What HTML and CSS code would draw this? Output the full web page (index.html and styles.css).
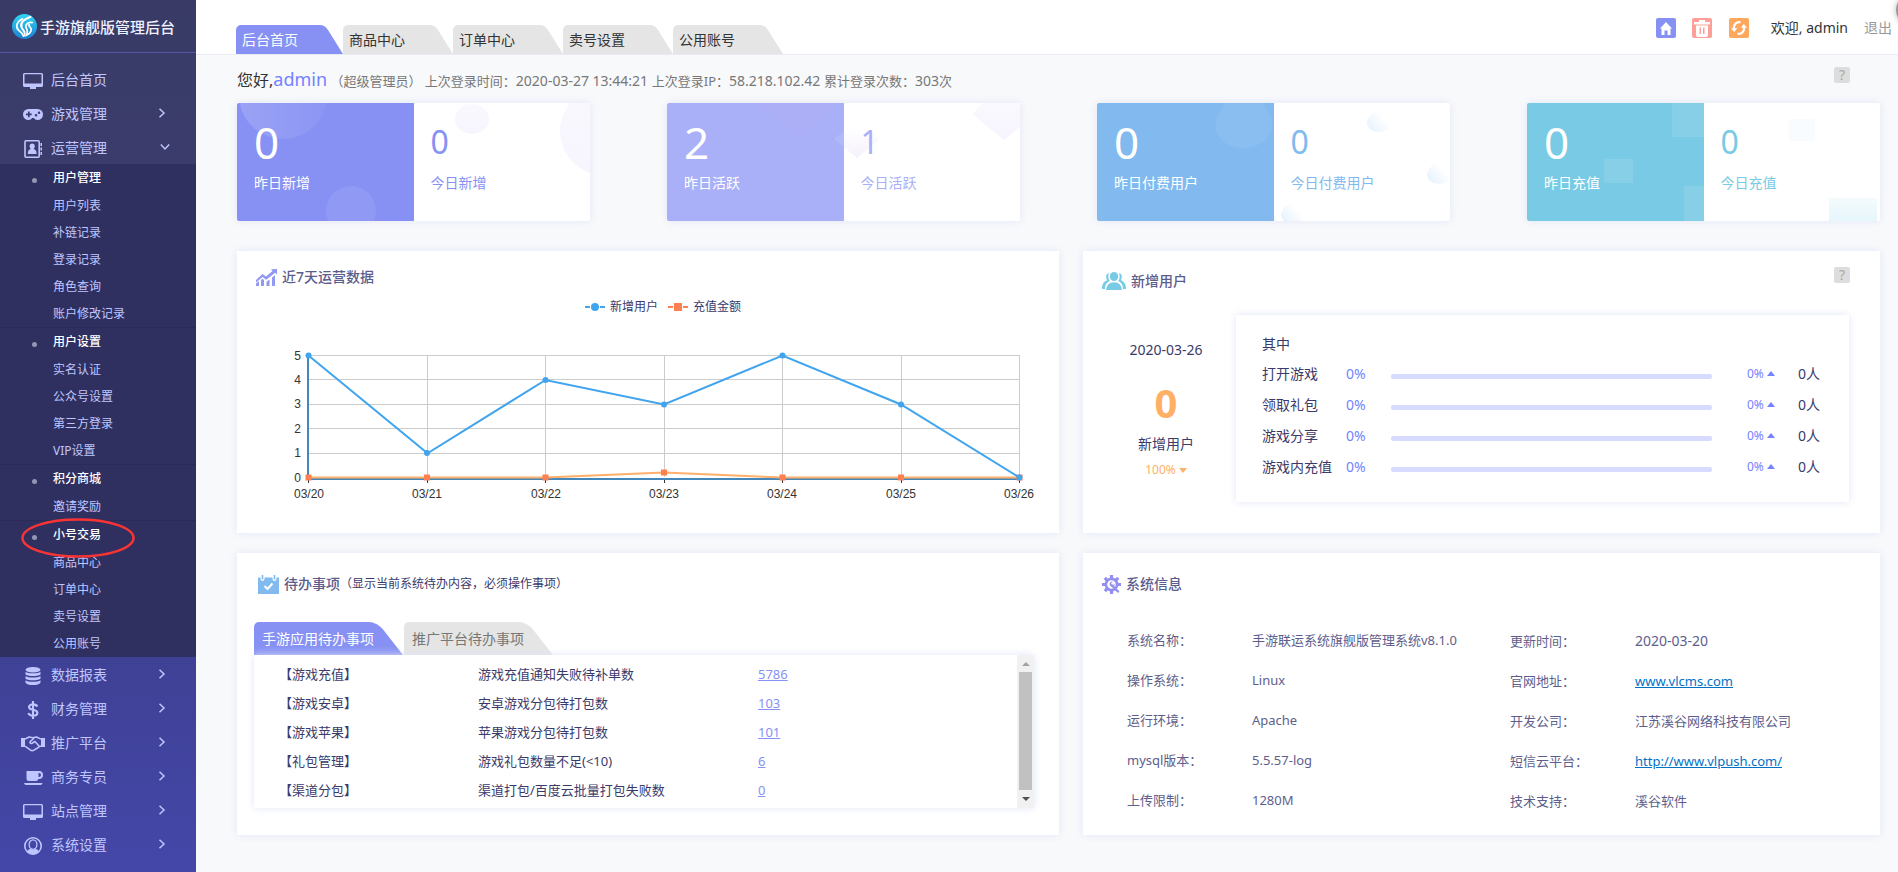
FILE: index.html
```html
<!DOCTYPE html>
<html lang="zh-CN">
<head>
<meta charset="utf-8">
<meta name="viewport" content="width=device-width, initial-scale=1">
<title>手游旗舰版管理后台</title>
<link rel="stylesheet" href="styles.css">
</head>
<body>
<svg width="0" height="0" class="defs" aria-hidden="true">
  <defs>
    <linearGradient id="logo-fill" x1="0" y1="0" x2="0" y2="1"><stop offset="0" stop-color="#2fd8f4"/><stop offset="1" stop-color="#1c80d0"/></linearGradient>
    <linearGradient id="drop-fill" x1="1" y1="0" x2="0" y2="1"><stop offset="0.4" stop-color="#fff"/><stop offset="1" stop-color="#e2f0fd"/></linearGradient>
    <linearGradient id="tint-fill" x1="0" y1="0" x2="0" y2="1"><stop offset="0" stop-color="#f9f9ff"/><stop offset="1" stop-color="#f7f4fd"/></linearGradient>
    <linearGradient id="spill-fill" x1="0" y1="0" x2="0" y2="1"><stop offset="0.2" stop-color="#f3edfc" stop-opacity="0"/><stop offset="1" stop-color="#f3edfc" stop-opacity=".8"/></linearGradient>
    <linearGradient id="fade-right" x1="0" y1="0" x2="1" y2="0"><stop offset="0" stop-color="#fff" stop-opacity=".16"/><stop offset="1" stop-color="#fff" stop-opacity=".04"/></linearGradient>
    <linearGradient id="cyan-fill" x1="0" y1="0" x2="0" y2="1"><stop offset="0" stop-color="#f4fbfd"/><stop offset="1" stop-color="#e6f6fb"/></linearGradient>
    <symbol id="i-monitor" viewBox="0 0 20 16"><path fill-rule="evenodd" d="M1.500 0h17A1.500 1.500 0 0 1 20 1.500v11a1.500 1.500 0 0 1-1.500 1.500H13v2H7v-2H1.500A1.500 1.500 0 0 1 0 12.500v-11A1.500 1.500 0 0 1 1.500 0zM1.500 1.200v9.300h17V1.200z"/></symbol>
    <symbol id="i-chevron" viewBox="0 0 8 10"><path d="M1.500 .8 6 5 1.500 9.200" fill="none" stroke="currentColor" stroke-width="1.500"/></symbol>
    <symbol id="i-drop" viewBox="0 0 24 28"><path d="M12 0C15 8 24 12 24 18.500A12 9.500 0 0 1 0 18.500C0 12 9 8 12 0z" fill="url(#drop-fill)"/></symbol>
  </defs>
</svg>

<div class="app">
  <aside class="sidebar">
    <div class="brand">
      <svg class="brand-logo" viewBox="0 0 26 26" aria-hidden="true"><circle cx="13" cy="13" r="13" fill="url(#logo-fill)"/><g fill="none" stroke="#fff" stroke-linecap="round"><path d="M19 3C13 5 8 9 10 14c1 3 4 3 3 8" stroke-width="2.200"/><path d="M11 5C5 8 3 13 7 17c2 2 4 3 5 6" stroke-width="1.800"/><path d="M21 9c-5-1-8 3-6 6 1 2 2 3 0 7 5-2 6-6 4-8-1-1-2-2-1-3" stroke-width="1.800"/></g></svg>
      <span>手游旗舰版管理后台</span>
    </div>
    <nav class="menu">
      <a class="menu-item" href="#"><span class="menu-icon"><svg width="20" height="16"><use href="#i-monitor"/></svg></span>后台首页</a>
      <a class="menu-item" href="#"><span class="menu-icon"><svg width="20" height="11" viewBox="0 0 20 11"><path fill-rule="evenodd" d="M5.500 0h9a5.500 5.500 0 0 1 0 11c-1.800 0-2.800-1-3.600-2H9.100c-.8 1-1.800 2-3.600 2a5.500 5.500 0 0 1 0-11zM5 2.500v2H3v1.700h2v2h1.700v-2h2V4.500h-2v-2zM13 5a1.200 1.200 0 1 0 .1 2.500A1.200 1.200 0 0 0 13 5zm3-2.500a1.200 1.200 0 1 0 .1 2.500 1.200 1.200 0 0 0-.1-2.500z"/></svg></span>游戏管理<svg class="chev" width="8" height="10"><use href="#i-chevron"/></svg></a>
      <a class="menu-item" href="#"><span class="menu-icon"><svg width="18" height="18" viewBox="0 0 18 18"><rect x="1" y=".8" width="14.200" height="16.400" rx="1" fill="none" stroke="currentColor" stroke-width="1.600"/><path d="M16.500 3H18v3h-1.500zm0 4.500H18v3h-1.500zm0 4.500H18v3h-1.500zM8.200 3.500c1.700 0 2.600 1.200 2.600 2.800 0 1.200-.6 2.200-1.200 2.700 1.600.4 3 1.600 3 5H3.800c0-3.400 1.400-4.600 3-5-.6-.5-1.200-1.500-1.200-2.700 0-1.600.9-2.800 2.600-2.800z"/></svg></span>运营管理<svg class="chev open" width="8" height="10"><use href="#i-chevron"/></svg></a>
      <div class="submenu">
        <div class="group"><a class="group-title" href="#">用户管理</a><a href="#">用户列表</a><a href="#">补链记录</a><a href="#">登录记录</a><a href="#">角色查询</a><a href="#">账户修改记录</a></div>
        <div class="group"><a class="group-title" href="#">用户设置</a><a href="#">实名认证</a><a href="#">公众号设置</a><a href="#">第三方登录</a><a href="#">VIP设置</a></div>
        <div class="group"><a class="group-title" href="#">积分商城</a><a href="#">邀请奖励</a></div>
        <div class="group"><a class="group-title marked" href="#">小号交易<svg class="ring" viewBox="0 0 114 40" aria-hidden="true"><ellipse cx="57" cy="20" rx="55.500" ry="18.500" fill="none" stroke="#fa3434" stroke-width="2.500"/></svg></a><a href="#">商品中心</a><a href="#">订单中心</a><a href="#">卖号设置</a><a href="#">公用账号</a></div>
      </div>
      <a class="menu-item" href="#"><span class="menu-icon"><svg width="16" height="18" viewBox="0 0 16 18"><ellipse cx="8" cy="2.800" rx="7.500" ry="2.800"/><path d="M.5 4.800c2.500 2 12.500 2 15 0v2.400c-1 2.400-14 2.400-15 0zM.5 9c2.500 2 12.500 2 15 0v2.400c-1 2.400-14 2.400-15 0zm0 4.200c2.500 2 12.500 2 15 0v2.200c-1 3.400-14 3.400-15 0z"/></svg></span>数据报表<svg class="chev" width="8" height="10"><use href="#i-chevron"/></svg></a>
      <a class="menu-item" href="#"><span class="menu-icon"><svg width="12" height="18" viewBox="0 0 12 18"><path d="M10.200 5.600C9.600 4 8 3.400 6 3.400c-2.300 0-4 .9-4 2.600 0 4 8.400 1.600 8.400 5.800 0 1.800-1.800 2.900-4.400 2.900-2.200 0-4-.8-4.600-2.700M6 0v18" fill="none" stroke="currentColor" stroke-width="2.100"/></svg></span>财务管理<svg class="chev" width="8" height="10"><use href="#i-chevron"/></svg></a>
      <a class="menu-item" href="#"><span class="menu-icon"><svg width="24" height="16" viewBox="0 0 24 16"><path d="M0 2h4v9H0zm20 0h4v9h-4z"/><path d="M4 3.200 8 1l4 .8L15.500 1 20 3.200M4 10.200l5.500 4c1.200.9 2.200.9 3.500 0l3.500-2.200c1.300-.8 1.400-1.600 3.500-2M13 2.200 9.200 5.600c-.8 1 .6 2.600 2.300 1.400L14 5.500l4 4.500" fill="none" stroke="currentColor" stroke-width="1.500" stroke-linejoin="round"/></svg></span>推广平台<svg class="chev" width="8" height="10"><use href="#i-chevron"/></svg></a>
      <a class="menu-item" href="#"><span class="menu-icon"><svg width="19" height="14" viewBox="0 0 19 14"><path fill-rule="evenodd" d="M2.500 0H15a4 4 0 0 1 0 8h-.7a2.500 2.500 0 0 1-2.300 2H5a2.500 2.500 0 0 1-2.500-2.500zM14.500 2v4h.5a2 2 0 0 0 0-4zM0 12h18.500c-.3 1.300-1 2-2 2H2c-1 0-1.700-.7-2-2z"/></svg></span>商务专员<svg class="chev" width="8" height="10"><use href="#i-chevron"/></svg></a>
      <a class="menu-item" href="#"><span class="menu-icon"><svg width="20" height="16"><use href="#i-monitor"/></svg></span>站点管理<svg class="chev" width="8" height="10"><use href="#i-chevron"/></svg></a>
      <a class="menu-item" href="#"><span class="menu-icon"><svg width="18" height="18" viewBox="0 0 18 18"><circle cx="9" cy="9" r="8.200" fill="none" stroke="currentColor" stroke-width="1.600"/><path d="M3 15c.6-2 1.800-2.800 3.600-3.200 1.400 1.200 3.400 1.200 4.800 0 1.800.4 3 1.200 3.600 3.200-3.500 3-8.500 3-12 0z"/><ellipse cx="9" cy="7.600" rx="3.900" ry="4.700" fill="none" stroke="currentColor" stroke-width="1.300"/></svg></span>系统设置<svg class="chev" width="8" height="10"><use href="#i-chevron"/></svg></a>
    </nav>
  </aside>

  <div class="main">
    <header class="topbar">
      <nav class="tabs">
        <a class="tab active" href="#">后台首页</a>
        <a class="tab" href="#">商品中心</a>
        <a class="tab" href="#">订单中心</a>
        <a class="tab" href="#">卖号设置</a>
        <a class="tab" href="#">公用账号</a>
      </nav>
      <div class="tools">
        <button class="tool home" type="button" aria-label="首页"><svg width="12" height="13" viewBox="0 0 12 13"><path d="M6 0 12 6.500h-1.500V13H7.500V8.500h-3V13H1.500V6.500H0z"/></svg></button>
        <button class="tool trash" type="button" aria-label="清除缓存"><svg width="16" height="17" viewBox="0 0 16 17"><path fill-rule="evenodd" d="M5 0h6v2h5v2.500H0V2h5zM2 5.500h12V15a2 2 0 0 1-2 2H4a2 2 0 0 1-2-2zM5.500 7.500V14h1.500V7.500zm3.500 0V14h1.500V7.500z"/></svg></button>
        <button class="tool refresh" type="button" aria-label="刷新"><svg width="16" height="14" viewBox="0 0 16 14"><path d="M9.500 1.200C5 .5 2.500 4 3 8M6.500 12.800C11 13.500 13.500 10 13 6" fill="none" stroke="#fff" stroke-width="2.200"/><path d="M0 7.200h6.300L3.200 11zM16 6.800H9.700L12.800 3z"/></svg></button>
        <span class="welcome">欢迎, admin</span>
        <a class="logout" href="#">退出</a>
      </div>
      <span class="edge-bubble" aria-hidden="true"></span>
    </header>

    <main class="content">
      <div class="greeting">
        <p><span class="hello">您好,</span><span class="user">admin</span> （超级管理员） 上次登录时间：<span class="value">2020-03-27 13:44:21 </span>上次登录IP：<span class="value">58.218.102.42 </span>累计登录次数：<span class="value">303</span>次</p>
        <button class="help" type="button" aria-label="帮助">?</button>
      </div>

      <section class="stats">
        <article class="stat violet">
          <div class="half solid"><svg class="deco" aria-hidden="true"><circle cx="46" cy="-8" r="44" fill="url(#fade-right)"/><circle cx="114" cy="108" r="25" fill="#fff" opacity=".08"/></svg><strong>0</strong><span>昨日新增</span></div>
          <div class="half"><svg class="deco" aria-hidden="true"><ellipse cx="58" cy="16" rx="17" ry="15" fill="url(#tint-fill)"/><circle cx="190" cy="28" r="44" fill="url(#tint-fill)"/></svg><strong>0</strong><span>今日新增</span></div>
        </article>
        <article class="stat lilac">
          <div class="half solid"><svg class="deco" aria-hidden="true"><path d="M90 0 132 34 172 0z" fill="#c8a8f0" opacity=".13"/></svg><strong>2</strong><span>昨日活跃</span></div>
          <div class="half"><svg class="deco" aria-hidden="true"><path d="M0 28 13 17 36 36 13 55 0 44z" fill="url(#spill-fill)"/><path d="M-10 36 0 28v16z" fill="#fff" opacity=".1"/><path d="M128 11 139 0h38v23l-17 14z" fill="url(#tint-fill)"/></svg><strong>1</strong><span>今日活跃</span></div>
        </article>
        <article class="stat blue">
          <div class="half solid"><svg class="deco" aria-hidden="true"><path d="M128 0h38c10 14 12 26 3 36-11 12-34 12-45 0-8-10-7-20 4-36z" fill="#fff" opacity=".07"/></svg><strong>0</strong><span>昨日付费用户</span></div>
          <div class="half"><svg class="deco" aria-hidden="true"><use href="#i-drop" x="93" y="1" width="24" height="28"/><use href="#i-drop" x="153" y="52" width="24" height="30"/><use href="#i-drop" x="7" y="92" width="24" height="30"/></svg><strong>0</strong><span>今日付费用户</span></div>
        </article>
        <article class="stat cyan">
          <div class="half solid"><svg class="deco" aria-hidden="true"><g fill="#fff" opacity=".1"><path d="M145 0h32v34h-32zM77 56h29v24H77zM157 83h20v35h-20z"/></g></svg><strong>0</strong><span>昨日充值</span></div>
          <div class="half"><svg class="deco" aria-hidden="true"><path d="M85 16h26v22H85z" fill="#f9fcfe"/><path d="M125 95h48v23h-48z" fill="url(#cyan-fill)"/></svg><strong>0</strong><span>今日充值</span></div>
        </article>
      </section>

      <section class="panels">
        <article class="panel trend">
          <h2 class="panel-title"><svg width="21" height="17" viewBox="0 0 21 17" fill="#9199f3"><path d="M0 11 6.500 5l3.500 2.500L16.500 2 15 .3 21 0v5.500l-1.800-1.700-9 7L6.500 8 0 13.500z"/><path d="M0 14.500 3 12v5H0zM5 11l1.500-1.200L8 11v6H5zm5.500 1.800 3-2.300V17h-3zM16 8.500l3-2.300V17h-3z"/></svg>近7天运营数据</h2>
          <svg class="chart" viewBox="0 0 822 238" role="img" aria-label="近7天运营数据">
            <g stroke-width="2" stroke="#40a4ee" fill="#40a4ee"><path d="M348 12h5M363 12h5"/><circle cx="358" cy="12" r="4" stroke="none"/></g>
            <g stroke-width="2" stroke="#ff7f50" fill="#ff7f50"><path d="M431 12h5M446 12h5"/><path d="M437 8h8v8h-8z" stroke="none"/></g>
            <g class="legend-text"><text x="373" y="16">新增用户</text><text x="456" y="16">充值金额</text></g>
            <path d="M71.500 60.500h711M71.500 84.500h711M71.500 109.500h711M71.500 133.500h711M71.500 158.500h711M190.500 60v122M308.500 60v122M427.500 60v122M545.500 60v122M664.500 60v122M782.500 60v122" fill="none" stroke="#ccc"/>
            <path d="M71.500 183v5M190.500 183v5M308.500 183v5M427.500 183v5M545.500 183v5M664.500 183v5M782.500 183v5" stroke="#333"/>
            <path d="M71 60v124h712" fill="none" stroke="#4488bb" stroke-width="2"/>
            <path d="M71 182.500H308.500L427 177.500 545.500 182.500H782.500" fill="none" stroke="#ffaf6c" stroke-width="2"/>
            <path d="M68.500 179.500h6v6h-6zM187 179.500h6v6h-6zM305.500 179.500h6v6h-6zM424 174.500h6v6h-6zM542.500 179.500h6v6h-6zM661 179.500h6v6h-6zM779.500 179.500h6v6h-6z" fill="#ff7f50"/>
            <path d="M71.500 60.500 190.500 158.300 308.500 85 427 109.500 545.500 60.500 664 109.500 782.500 182.500" fill="none" stroke="#40a4ee" stroke-width="2"/>
            <g fill="#40a4ee"><circle cx="71.500" cy="60.500" r="3"/><circle cx="190" cy="158" r="3"/><circle cx="308.500" cy="85" r="3"/><circle cx="427" cy="109.500" r="3"/><circle cx="545.500" cy="60.500" r="3"/><circle cx="664" cy="109.500" r="3"/><circle cx="782.500" cy="182.500" r="3"/></g>
            <g class="axis-text" text-anchor="end"><text x="64" y="65">5</text><text x="64" y="89">4</text><text x="64" y="113">3</text><text x="64" y="138">2</text><text x="64" y="162">1</text><text x="64" y="187">0</text></g>
            <g class="axis-text" text-anchor="middle"><text x="72" y="203">03/20</text><text x="190" y="203">03/21</text><text x="309" y="203">03/22</text><text x="427" y="203">03/23</text><text x="545" y="203">03/24</text><text x="664" y="203">03/25</text><text x="782" y="203">03/26</text></g>
          </svg>
        </article>

        <article class="panel users">
          <div class="users-head">
            <h2 class="panel-title"><svg width="24" height="18" viewBox="0 0 24 18" fill="#78cbe4"><ellipse cx="12" cy="4.500" rx="4.200" ry="4.500"/><path d="M4.200 18c0-5 3.200-7.800 7.800-7.800s7.800 2.800 7.800 7.800z"/><path d="M7 1.200C3.800 1.200 3.300 6 5.300 8 1.500 9.500 0 12.500 0 17h3c0-4 1.300-6 4.800-8C6 7 6 3.500 7 1.200zM17 1.200c3.200 0 3.700 4.800 1.700 6.800 3.800 1.500 5.300 4.500 5.300 9h-3c0-4-1.300-6-4.800-8C18 7 18 3.500 17 1.200z"/></svg>新增用户</h2>
            <button class="help" type="button" aria-label="帮助">?</button>
          </div>
          <div class="users-body">
            <div class="total">
              <span class="date">2020-03-26</span>
              <strong>0</strong>
              <span>新增用户</span>
              <small>100%<i class="tri down"></i></small>
            </div>
            <div class="detail">
              <h3>其中</h3>
              <div class="detail-row"><span>打开游戏</span><b>0%</b><i class="bar"></i><em>0%<i class="tri up"></i></em><span>0人</span></div>
              <div class="detail-row"><span>领取礼包</span><b>0%</b><i class="bar"></i><em>0%<i class="tri up"></i></em><span>0人</span></div>
              <div class="detail-row"><span>游戏分享</span><b>0%</b><i class="bar"></i><em>0%<i class="tri up"></i></em><span>0人</span></div>
              <div class="detail-row"><span>游戏内充值</span><b>0%</b><i class="bar"></i><em>0%<i class="tri up"></i></em><span>0人</span></div>
            </div>
          </div>
        </article>

        <article class="panel todo">
          <h2 class="panel-title"><svg width="21" height="19" viewBox="0 0 21 19"><path d="M0 2.500h2.500V4a2 2 0 0 0 4 0V2.500h8V4a2 2 0 0 0 4 0V2.500H21V19H0z" fill="#82baf0"/><path d="M3.700 0h1.600v4.500H3.700zM15.700 0h1.600v4.500h-1.600z" fill="#82baf0"/><path d="m6.500 11 3 3 5-5.500" fill="none" stroke="#fff" stroke-width="2"/></svg>待办事项<small>（显示当前系统待办内容，必须操作事项）</small></h2>
          <div class="todo-tabs">
            <button class="tab wide active" type="button">手游应用待办事项</button>
            <button class="tab wide" type="button">推广平台待办事项</button>
          </div>
          <div class="todo-box">
            <table class="todo-table">
              <tr><td>【游戏充值】</td><td>游戏充值通知失败待补单数</td><td><a href="#">5786</a></td></tr>
              <tr><td>【游戏安卓】</td><td>安卓游戏分包待打包数</td><td><a href="#">103</a></td></tr>
              <tr><td>【游戏苹果】</td><td>苹果游戏分包待打包数</td><td><a href="#">101</a></td></tr>
              <tr><td>【礼包管理】</td><td>游戏礼包数量不足(&lt;10)</td><td><a href="#">6</a></td></tr>
              <tr><td>【渠道分包】</td><td>渠道打包/百度云批量打包失败数</td><td><a href="#">0</a></td></tr>
            </table>
            <div class="scroll" aria-hidden="true"><i class="arrow-up"></i><i class="thumb"></i><i class="arrow-down"></i></div>
          </div>
        </article>

        <article class="panel system">
          <h2 class="panel-title"><svg width="19" height="19" viewBox="0 0 19 19"><circle cx="9.500" cy="9.500" r="5.600" fill="none" stroke="#938ff0" stroke-width="2.600"/><g stroke="#938ff0" stroke-width="3.200"><path d="M9.500 0v3.500M9.500 15.500V19M0 9.500h3.500M15.500 9.500H19M2.800 2.800l2.500 2.500M2.800 16.200l2.500-2.500M16.200 2.800l-2.500 2.500"/></g><path d="m10 10.500 6 6" stroke="#938ff0" stroke-width="2.400" stroke-linecap="round"/><path d="M10.800 6.500 9.200 8l.5 1.700 1.700.4 1.300-1.400c.5 2.300-2.500 3.800-4.300 2.200C6.500 9 8.300 6 10.800 6.500z" fill="#938ff0"/></svg>系统信息</h2>
          <div class="info">
            <dl>
              <dt>系统名称：</dt><dd>手游联运系统旗舰版管理系统v8.1.0</dd>
              <dt>操作系统：</dt><dd>Linux</dd>
              <dt>运行环境：</dt><dd>Apache</dd>
              <dt>mysql版本：</dt><dd>5.5.57-log</dd>
              <dt>上传限制：</dt><dd>1280M</dd>
            </dl>
            <dl class="second">
              <dt>更新时间：</dt><dd class="value">2020-03-20</dd>
              <dt>官网地址：</dt><dd><a href="#">www.vlcms.com</a></dd>
              <dt>开发公司：</dt><dd>江苏溪谷网络科技有限公司</dd>
              <dt>短信云平台：</dt><dd><a href="#">http://www.vlpush.com/</a></dd>
              <dt>技术支持：</dt><dd>溪谷软件</dd>
            </dl>
          </div>
        </article>
      </section>
    </main>
  </div>
</div>
</body>
</html>
```

FILE: styles.css
```css
* { box-sizing: border-box; }

body {
  margin: 0;
  background: #f8f9fb;
  color: #3a3a6b;
  font: 14px/20px "Noto Sans", "Noto Sans CJK SC", sans-serif;
}

a { color: inherit; text-decoration: none; }
h2, h3, p, dl, dd { margin: 0; font-weight: 400; }
button { border: 0; margin: 0; padding: 0; font: inherit; color: inherit; cursor: pointer; }
i, em { font-style: normal; }
svg { display: block; flex: none; }
.defs { position: absolute; }
.value { font-size: 14px; }

.app { display: flex; min-height: 100vh; overflow: hidden; }

/* Sidebar */
.sidebar {
  flex: none;
  width: 196px;
  background: linear-gradient(#393b66, #3b3c6c 20%, #3f4195 75%, #4447a8);
  color: #bfc6ff;
}
.brand {
  display: flex;
  align-items: center;
  gap: 3px;
  height: 53px;
  padding: 1px 0 0 12px;
  border-bottom: 1px solid #5357a3;
  color: #eef0ff;
  font-size: 15px;
  font-weight: 500;
}
.brand-logo { width: 25px; height: 25px; }
.menu { padding-top: 9px; }
.menu-item { display: flex; align-items: center; height: 34px; padding: 2px 30px 0 0; }
.menu-icon { display: flex; justify-content: center; width: 24px; margin: 1px 6px 0 21px; }
.menu-icon svg, .tool svg { fill: currentColor; }
.chev { margin: 0 0 2px auto; }
.chev.open { transform: rotate(90deg); margin-right: -3px; }

.submenu { background: #2f305f; font-size: 12px; }
.group + .group { border-top: 1px solid #292a55; }
.group a { display: block; padding-left: 53px; line-height: 27px; }
.group .group-title { position: relative; line-height: 28px; color: #fff; font-weight: 500; }
.group-title::before {
  content: "";
  position: absolute;
  left: 32px;
  top: 14px;
  width: 5px;
  height: 5px;
  border-radius: 50%;
  background: #9695b3;
}
.ring { position: absolute; left: 21px; top: -3px; width: 114px; height: 40px; z-index: 1; }

/* Top bar */
.main { flex: 1; min-width: 0; }
.topbar {
  position: relative;
  display: flex;
  justify-content: space-between;
  align-items: flex-end;
  height: 55px;
  padding: 0 6px 0 40px;
  background: #fff;
  border-bottom: 1px solid #e9ecf6;
}
.tabs { display: flex; }
.tab {
  position: relative;
  z-index: 0;
  display: block;
  width: 110px;
  height: 29px;
  padding-left: 6px;
  border-radius: 5px 0 0 0;
  overflow: hidden;
  background: none;
  color: #333;
  line-height: 29px;
  text-align: left;
}
.tab::before {
  content: "";
  position: absolute;
  z-index: -1;
  inset: 0 0 0 -40px;
  border-radius: 0 5px 0 0;
  background: #e5e5e5;
  transform: skewX(32deg);
  transform-origin: right bottom;
}
.tab.active { width: 107px; color: #fff; }
.tab.active::before { background: #8791f3; }
.tools { display: flex; align-items: center; align-self: flex-start; padding-top: 18px; }
.tool {
  display: flex;
  align-items: center;
  justify-content: center;
  width: 20px;
  height: 20px;
  margin-right: 16px;
  border-radius: 2px;
  color: #fff;
}
.home { background: #8791f3; }
.trash { background: #ff9f99; margin-right: 17px; }
.refresh { background: #ffa75c; margin-right: 22px; }
.welcome { margin-right: 16px; color: #333; }
.logout { color: #999; }
.edge-bubble {
  position: absolute;
  right: -30px;
  top: -6px;
  width: 32px;
  height: 32px;
  border-radius: 50%;
  background: #999;
  box-shadow: 0 0 6px #bbb;
}

/* Content */
.content { padding: 12px 18px 37px 41px; }
.greeting { display: flex; align-items: flex-start; justify-content: space-between; padding-right: 30px; }
.greeting p { line-height: 24px; height: 36px; color: #777; font-size: 13px; white-space: pre-wrap; }
.hello { color: #333; font-size: 16px; }
.user { color: #7382ff; font-size: 18px; }
.help { width: 16px; height: 16px; border-radius: 2px; background: #ddd; color: #aaa; line-height: 16px; text-align: center; }

.stats { display: grid; grid-template-columns: repeat(4, 1fr); gap: 77px; }
.stat {
  display: grid;
  grid-template-columns: 1fr 1fr;
  height: 118px;
  overflow: hidden;
  border-radius: 2px;
  background: #fff;
}
.stat, .panel, .detail { box-shadow: 0 0 8px #e2e6f6; }
.half { position: relative; display: flex; flex-direction: column; padding: 19px 0 0 17px; color: var(--tone); }
.half strong, .half span { position: relative; }
.half strong { height: 51px; font-size: 32px; font-weight: 400; line-height: 40px; }
.half.solid { background: var(--tone); color: #fff; }
.half.solid strong { font-size: 44px; }
.deco { position: absolute; inset: 0; width: 100%; height: 100%; overflow: visible; }
.solid .deco { overflow: hidden; }
.violet { --tone: #8791f3; }
.lilac { --tone: #a9b0f7; }
.blue { --tone: #82baf0; }
.cyan { --tone: #79cae4; }

.panels { display: grid; grid-template-columns: 822fr 797fr; gap: 20px 24px; margin-top: 30px; }
.panel { min-width: 0; min-height: 282px; background: #fff; }
.panel-title { display: flex; align-items: center; gap: 5px; color: #5c5c8d; font-size: 14px; font-weight: 500; line-height: 20px; }
.panel-title small { color: #3a3a6b; font-size: 12px; font-weight: 400; }

/* Trend chart */
.trend .panel-title { padding: 16px 0 8px 19px; }
.chart { width: 100%; height: auto; }
.legend-text { font-size: 12px; fill: #3a3a6b; }
.axis-text { font: 12px "Liberation Sans", sans-serif; fill: #333; }

/* New users */
.users-head { display: flex; align-items: flex-start; justify-content: space-between; padding: 16px 30px 0 19px; }
.users-head .panel-title { padding-top: 4px; }
.users-body { display: grid; grid-template-columns: 122px 1fr; padding: 24px 31px 31px; }
.total { display: flex; flex-direction: column; align-items: center; padding: 25px 18px 0 0; }
.total strong { margin: 18px 0 6px; color: #ffb067; font-size: 40px; line-height: 50px; }
.total small { display: flex; align-items: center; gap: 3px; margin-top: 6px; color: #ffb067; font-size: 12px; }
.tri { width: 0; height: 0; border: 4px solid transparent; border-top-width: 0; border-bottom-width: 0; }
.tri.down { border-top: 5px solid #ffb067; }
.tri.up { border-bottom: 5px solid #7382ff; }
.detail { height: 187px; padding: 19px 23px 0 26px; }
.detail h3 { font-size: 14px; margin-bottom: 4px; }
.detail-row { display: grid; grid-template-columns: 84px 45px 1fr 51px 28px; align-items: center; height: 31px; }
.detail-row b { color: #7382ff; font-weight: 400; }
.bar { height: 5px; margin: 5px 35px 0 0; border-radius: 2px; background: #d7dbff; }
.detail-row em { display: flex; align-items: center; gap: 3px; color: #7382ff; font-size: 12px; }

/* To-do list */
.todo .panel-title { padding: 21px 0 0 21px; }
.todo .panel-title small { margin-left: -5px; }
.todo-tabs { display: flex; gap: 1px; margin: 28px 0 0 17px; }
.tab.wide { width: 149px; height: 33px; padding-left: 8px; line-height: 33px; color: #777; }
.tab.wide.active { color: #fff; }
.tab.wide::before { transform: skewX(38deg); border-radius: 0 8px 0 0; }
.todo-box { display: flex; height: 153px; margin: 0 25px 0 17px; background: #fff; box-shadow: 0 0 8px #e2e6f6; position: relative; }
.todo-table { flex: 1; align-self: flex-start; margin-top: 4px; border-collapse: collapse; table-layout: fixed; font-size: 13px; }
.todo-table td { height: 29px; padding: 0; }
.todo-table td:first-child { width: 224px; padding-left: 25px; }
.todo-table td:nth-child(2) { width: 280px; }
.todo-table a { color: #8791f3; text-decoration: underline; }
.scroll { display: flex; flex-direction: column; align-items: center; width: 17px; padding: 7px 0; background: #f1f1f1; }
.arrow-up, .arrow-down { border: 4px solid transparent; }
.arrow-up { border-top: 0; border-bottom-color: #a3a3a3; }
.arrow-down { border-bottom: 0; border-top-color: #505050; }
.thumb { flex: 1; width: 13px; margin: 6px 0 7px; background: #c1c1c1; }

/* System info */
.system .panel-title { padding: 21px 0 0 19px; }
.info { display: grid; grid-template-columns: 383px 1fr; padding: 26px 0 0 44px; color: #5e5e8c; font-size: 13px; }
.info dl { display: grid; grid-template-columns: 125px 1fr; align-content: start; line-height: 40px; }
.info .second { padding-top: 1px; }
.info a { color: #0072c6; text-decoration: underline; }
```
